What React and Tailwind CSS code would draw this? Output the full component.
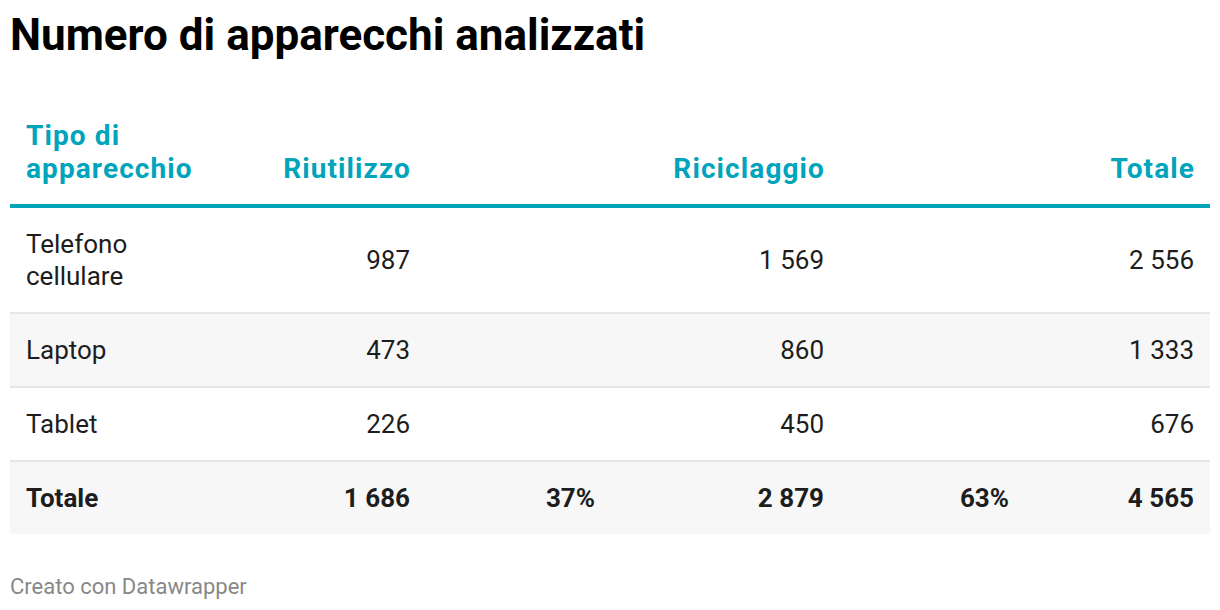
export default function App() {
  const teal = "text-[#00a4bb]";
  const rows = [
    { name: ["Telefono", "cellulare"], a: "987", b: "1 569", t: "2 556", bg: "bg-white" },
    { name: ["Laptop"], a: "473", b: "860", t: "1 333", bg: "bg-[#f7f7f7]" },
    { name: ["Tablet"], a: "226", b: "450", t: "676", bg: "bg-white" },
  ];
  const grid = "grid grid-cols-[200px_216px_185px_229px_185px_185px]";
  return (
    <div className="w-[1220px] h-[610px] bg-white px-[10px] text-[#1d1d1d]" style={{ fontFamily: "Roboto, sans-serif" }}>
      <h1 className="pt-[13px] text-[44px] leading-[44px] font-bold text-black">Numero di apparecchi analizzati</h1>
      <div className="mt-[44px]">
        <div className={`${grid} items-end border-b-4 border-[#00a4bb] pt-[18px] pb-[19px] text-[28px] leading-[33px] font-bold tracking-[1.1px] ${teal}`}>
          <div className="px-4">Tipo di<br />apparecchio</div>
          <div className="pl-4 pr-[15px] text-right">Riutilizzo</div>
          <div></div>
          <div className="pl-4 pr-[15px] text-right">Riciclaggio</div>
          <div></div>
          <div className="pl-4 pr-[15px] text-right">Totale</div>
        </div>
        {rows.map((r, i) => (
          <div key={i} className={`${grid} items-center ${r.bg} ${i > 0 ? "border-t-2 border-[#e6e6e6]" : ""} py-5 text-[26px] leading-[32px]`}>
            <div className="px-4">
              {r.name.map((n, j) => (
                <div key={j}>{n}</div>
              ))}
            </div>
            <div className="px-4 text-right">{r.a}</div>
            <div></div>
            <div className="px-4 text-right">{r.b}</div>
            <div></div>
            <div className="px-4 text-right">{r.t}</div>
          </div>
        ))}
        <div className={`${grid} items-center bg-[#f7f7f7] border-t-2 border-[#e6e6e6] py-5 text-[26px] leading-[32px] font-bold`}>
          <div className="px-4">Totale</div>
          <div className="px-4 text-right">1 686</div>
          <div className="px-4 text-right">37%</div>
          <div className="px-4 text-right">2 879</div>
          <div className="px-4 text-right">63%</div>
          <div className="px-4 text-right">4 565</div>
        </div>
      </div>
      <div className="mt-[42px] text-[22px] leading-[22px] text-[#888888]">Creato con Datawrapper</div>
    </div>
  );
}
